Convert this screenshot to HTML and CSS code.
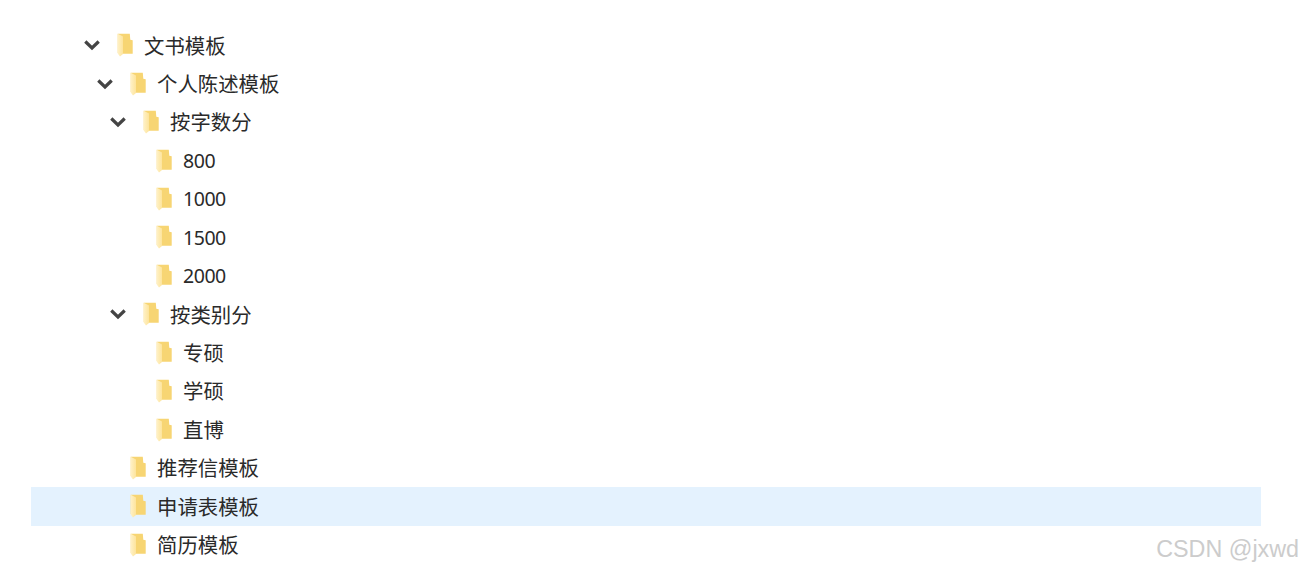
FILE: index.html
```html
<!DOCTYPE html>
<html lang="zh-CN">
<head>
  <meta charset="utf-8">
  <title>文书模板</title>
  <link rel="stylesheet" href="styles.css">
</head>
<body>
  <svg class="defs" width="0" height="0">
    <defs>
      <linearGradient id="folder-front" x1="0" y1="0" x2="1" y2="0">
        <stop offset="0" stop-color="#fff1c6"/>
        <stop offset="1" stop-color="#fde49c"/>
      </linearGradient>
      <symbol id="folder" viewBox="0 0 18 24">
        <path d="M.7 .8H12.800l.5 6 2.400 .5V20.800H4L.7 20z" fill="#f7d573"/>
        <path d="M.7 .8L6 3.500V21L3 23.400 .7 20.500z" fill="url(#folder-front)"/>
      </symbol>
      <symbol id="chevron" viewBox="0 0 18 12">
        <path d="M2.300 2.500L9 9l6.700-6.500" fill="none" stroke="#444" stroke-width="3.200"/>
      </symbol>
    </defs>
  </svg>

  <ul class="tree">
    <li class="row level0"><svg class="arrow"><use href="#chevron"/></svg><svg class="folder"><use href="#folder"/></svg><span class="name">文书模板</span></li>
    <li class="row level1"><svg class="arrow"><use href="#chevron"/></svg><svg class="folder"><use href="#folder"/></svg><span class="name">个人陈述模板</span></li>
    <li class="row level2"><svg class="arrow"><use href="#chevron"/></svg><svg class="folder"><use href="#folder"/></svg><span class="name">按字数分</span></li>
    <li class="row level3"><span class="arrow"></span><svg class="folder"><use href="#folder"/></svg><span class="name num">800</span></li>
    <li class="row level3"><span class="arrow"></span><svg class="folder"><use href="#folder"/></svg><span class="name num">1000</span></li>
    <li class="row level3"><span class="arrow"></span><svg class="folder"><use href="#folder"/></svg><span class="name num">1500</span></li>
    <li class="row level3"><span class="arrow"></span><svg class="folder"><use href="#folder"/></svg><span class="name num">2000</span></li>
    <li class="row level2"><svg class="arrow"><use href="#chevron"/></svg><svg class="folder"><use href="#folder"/></svg><span class="name">按类别分</span></li>
    <li class="row level3"><span class="arrow"></span><svg class="folder"><use href="#folder"/></svg><span class="name">专硕</span></li>
    <li class="row level3"><span class="arrow"></span><svg class="folder"><use href="#folder"/></svg><span class="name">学硕</span></li>
    <li class="row level3"><span class="arrow"></span><svg class="folder"><use href="#folder"/></svg><span class="name">直博</span></li>
    <li class="row level1"><span class="arrow"></span><svg class="folder"><use href="#folder"/></svg><span class="name">推荐信模板</span></li>
    <li class="row level1 selected"><span class="arrow"></span><svg class="folder"><use href="#folder"/></svg><span class="name">申请表模板</span></li>
    <li class="row level1"><span class="arrow"></span><svg class="folder"><use href="#folder"/></svg><span class="name">简历模板</span></li>
  </ul>

  <div class="watermark">CSDN @jxwd</div>
</body>
</html>
```

FILE: styles.css
```css
html, body {
  height: 100%;
}

body {
  margin: 0;
  padding: 26px 42px 0 31px;
  box-sizing: border-box;
  overflow: hidden;
  background: #fff;
  color: #2a2a2a;
  font-family: "Noto Sans CJK SC", "Noto Sans", sans-serif;
}

.defs {
  position: absolute;
}

.tree {
  list-style: none;
  margin: 0;
  padding: 0;
}

.row {
  display: flex;
  align-items: center;
  height: 38.45px;
}

.level0 { padding-left: 52px; }
.level1 { padding-left: 65px; }
.level2 { padding-left: 78px; }
.level3 { padding-left: 91px; }

.selected {
  background: #e4f2fe;
}

.arrow {
  flex: none;
  width: 18px;
  height: 12px;
  margin-right: 16px;
}

.folder {
  flex: none;
  width: 18px;
  height: 24px;
  margin-right: 9px;
}

.name {
  font-size: 20.400px;
  line-height: 1;
  position: relative;
  top: -0.5px;
}

.num {
  font-family: "Noto Sans", sans-serif;
  font-size: 19.500px;
  letter-spacing: -0.45px;
  top: 0;
}

.watermark {
  position: absolute;
  right: 4px;
  bottom: 7px;
  color: #cccccc;
  font-family: "Liberation Sans", sans-serif;
  font-size: 23.300px;
  line-height: 1.200;
}
```
